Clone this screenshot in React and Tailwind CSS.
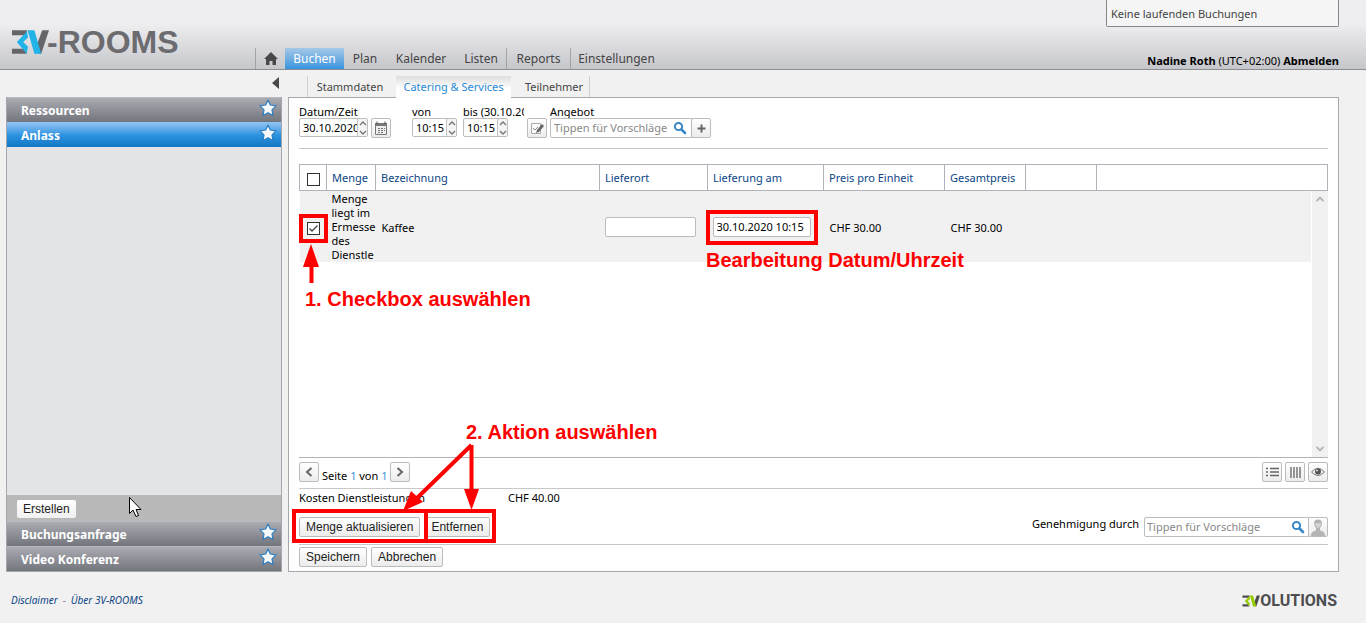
import React from "react";

function SearchIcon() {
  return (
    <svg width="14" height="14" viewBox="0 0 14 14" fill="none" className="shrink-0">
      <circle cx="5.5" cy="5.5" r="3.6" stroke="#3b87c4" strokeWidth="2" />
      <path d="M8.5 8.5L12 12" stroke="#3b87c4" strokeWidth="2.6" strokeLinecap="round" />
    </svg>
  );
}

function StarIcon() {
  return (
    <svg width="18" height="18" viewBox="0 0 18 18">
      <path d="M9 1L11.300 6L17 6.800L13 10.800L14 16.500L9 13.800L4 16.500L5 10.800L1 6.800L6.700 6Z" fill="#f6f8fa" stroke="#2a7fc2" strokeWidth="1.2" strokeLinejoin="round" />
    </svg>
  );
}

function Mark({ width, height, dark, bright }) {
  return (
    <svg width={width} height={height} viewBox="0 0 39 24" role="img" aria-label="3V" className="shrink-0">
      <path d="M1 0H17L14 5H1ZM1 19H13L16 24H1Z" fill={dark} />
      <path d="M39 0H32L26.500 15L29 24H31Z" fill={dark} />
      <path d="M16.500 1L6 12L16 24L17.500 17L12.500 12L17.500 7.500Z" fill={bright} />
      <path d="M17 0H24L31 24H24Z" fill={bright} />
    </svg>
  );
}

function Chevrons() {
  return (
    <span className="flex h-full w-[10px] shrink-0 items-center justify-center border-l border-[#c4c4c4] bg-[#f4f4f4]">
      <svg width="8" height="16" viewBox="0 0 8 16" fill="none" stroke="#777" strokeWidth="1.4">
        <path d="M1 5L4 2L7 5M1 11L4 14L7 11" />
      </svg>
    </span>
  );
}

function Spin({ id, label, value, width, gap }) {
  return (
    <div className={gap}>
      <label htmlFor={id} className="block h-[13px] overflow-hidden whitespace-nowrap text-[11px] leading-[14px]">{label}</label>
      <div className={`flex h-[19px] overflow-hidden rounded-xs border border-[#bdbdbd] bg-white ${width}`}>
        <input id={id} defaultValue={value} className="h-full w-full min-w-0 flex-1 pl-[3px] text-[11px] outline-none" />
        <Chevrons />
      </div>
    </div>
  );
}

function IconButton({ label, children, className = "" }) {
  return (
    <button aria-label={label} className={`flex size-5 shrink-0 items-center justify-center rounded-xs border border-[#bcbcbc] bg-linear-to-b from-white to-[#ececec] ${className}`}>
      {children}
    </button>
  );
}

function PushButton({ children }) {
  return (
    <button className="h-5 rounded-xs border border-[#bcbcbc] bg-linear-to-b from-white to-[#ececec] px-[6px] font-['Liberation_Sans',sans-serif] text-[12px] leading-[18px] text-[#222]">
      {children}
    </button>
  );
}

function PanelHeader({ title, active }) {
  return (
    <button className={`flex h-[25px] w-full shrink-0 items-start justify-between border-t pr-1 pl-[14px] text-left text-[12px] leading-[26px] font-bold text-white ${active ? "border-[#8fc3ef] bg-linear-to-b from-[#8cc2f4] via-[#2c93e0] to-[#1078c6]" : "border-[#b9bac0] bg-linear-to-b from-[#abacb2] to-[#73757d]"}`}>
      <span>{title}</span>
      <span className="pt-px"><StarIcon /></span>
    </button>
  );
}

const nav = [
  { label: "Plan", cls: "w-[42px]" },
  { label: "Kalender", cls: "w-[70px]" },
  { label: "Listen", cls: "w-[50px]" },
  { label: "Reports", cls: "w-[64px] border-l border-[#a2a3a7]" },
  { label: "Einstellungen", cls: "w-[92px] border-l border-[#a2a3a7]" },
];

function Header() {
  return (
    <header className="flex h-[70px] justify-between border-b border-[#8d8e93] bg-linear-to-b from-[#eeeef0] from-35% to-[#c6c7cb] pr-[27px]">
      <div className="flex items-end">
        <div className="flex w-[255px] items-center self-start pt-6 pl-[11px] text-[#6b6b70]">
          <Mark width="38" height="24" dark="#65656a" bright="#22b3e8" />
          <span className="-ml-0.5 font-['Liberation_Sans',sans-serif] text-[32px] leading-9 font-bold">-ROOMS</span>
        </div>
        <nav className="flex h-[21px] text-[12px] leading-[21px] text-[#444]">
          <a href="#home" aria-label="Startseite" className="flex w-[30px] items-center justify-center border-l border-[#a2a3a7]">
            <svg width="14" height="13" viewBox="0 0 14 13" fill="#484848">
              <path d="M7 0L14 7H12V13H8.500V9H5.500V13H2V7H0Z" />
            </svg>
          </a>
          <a href="#buchen" className="w-[59px] bg-linear-to-b from-[#a3c8e6] to-[#3494de] text-center text-white">Buchen</a>
          {nav.map((n) => (
            <a key={n.label} href={"#" + n.label} className={`text-center ${n.cls}`}>{n.label}</a>
          ))}
        </nav>
      </div>
      <div className="flex flex-col items-end justify-between text-[11px]">
        <div className="h-[27px] w-[233px] rounded-b-xs border border-t-0 border-[#85858a] bg-[#f5f5f5] pt-[5px] pl-1 leading-[18px] text-[#444]">Keine laufenden Buchungen</div>
        <div className="text-black">
          <b>Nadine Roth</b> (UTC+02:00) <a href="#abmelden" className="font-bold">Abmelden</a>
        </div>
      </div>
    </header>
  );
}

function Sidebar() {
  return (
    <aside className="flex w-[276px] shrink-0 flex-col">
      <div className="flex h-[27px] justify-end pt-[7px] pr-[3px]">
        <button aria-label="Einklappen" className="h-3">
          <svg width="7" height="12" viewBox="0 0 7 12"><path d="M7 0V12L0 6Z" fill="#484848" /></svg>
        </button>
      </div>
      <div className="flex flex-1 flex-col border border-t-0 border-[#a6a7ae] bg-[#e3e4e6]">
        <PanelHeader title="Ressourcen" />
        <PanelHeader title="Anlass" active />
        <div className="flex-1" />
        <div className="flex h-[26px] shrink-0 items-start bg-[#b9b9b9] pt-[5px] pl-[10px]">
          <button className="h-[18px] rounded-xs bg-linear-to-b from-white to-[#f0f0f0] px-[6px] font-['Liberation_Sans',sans-serif] text-[12px] leading-[18px] text-[#222]">Erstellen</button>
        </div>
        <PanelHeader title="Buchungsanfrage" />
        <PanelHeader title="Video Konferenz" />
      </div>
    </aside>
  );
}

function Tabs() {
  return (
    <div className="flex h-[21px] items-stretch pl-[19px] text-[11px] leading-[22px] text-[#444]">
      <button className="w-[89px] border-l border-[#cfcfcf] pr-1">Stammdaten</button>
      <button className="relative z-10 -mb-px w-[115px] bg-linear-to-b from-[#dedede] to-white to-60% text-[#2a8ad6]">Catering &amp; Services</button>
      <button className="w-[79px] border-r border-[#cfcfcf] pl-2">Teilnehmer</button>
    </div>
  );
}

function Filters() {
  return (
    <div className="flex h-[44px] items-start border-b border-[#c8c8c8]">
      <Spin id="datum" label="Datum/Zeit" value="30.10.2020" width="w-[69px]" gap="" />
      <IconButton label="Kalender öffnen" className="mt-[13px] ml-[3px]">
        <svg width="14" height="14" viewBox="0 0 14 14">
          <path d="M1.500 2.500H12.500V13.500H1.500Z" fill="#eee" stroke="#777" />
          <path d="M1 2H13V5H1Z" fill="#777" />
          <path d="M3 0.500V3M11 0.500V3" stroke="#555" />
          <path d="M4 7.500H11M4 9.500H11M4 11.500H9" stroke="#777" strokeDasharray="2 1" />
        </svg>
      </IconButton>
      <Spin id="von" label="von" value="10:15" width="w-[45px]" gap="ml-[21px]" />
      <Spin id="bis" label="bis (30.10.20" value="10:15" width="w-[45px]" gap="ml-[6px] w-[61px]" />
      <IconButton label="Notiz" className="mt-[13px] ml-[3px]">
        <svg width="14" height="14" viewBox="0 0 14 14">
          <path d="M1.500 2.500H10.500V12.500H1.500Z" fill="#fafafa" stroke="#aaa" />
          <path d="M3 7L5 9L8 6" stroke="#888" fill="none" />
          <path d="M6 12L7 9L12 3L14 5L9 11Z" fill="#666" />
        </svg>
      </IconButton>
      <div className="ml-[3px]">
        <label htmlFor="angebot" className="block h-[13px] text-[11px] leading-[14px]">Angebot</label>
        <div className="flex">
          <div className="flex h-5 w-[142px] items-center rounded-l-xs border border-[#bdbdbd] bg-white pr-1">
            <input id="angebot" placeholder="Tippen für Vorschläge" className="w-full min-w-0 flex-1 pl-[3px] text-[11px] outline-none placeholder:text-[#888]" />
            <SearchIcon />
          </div>
          <IconButton label="Hinzufügen" className="-ml-px">
            <svg width="9" height="9" viewBox="0 0 9 9"><path d="M4.500 0.500V8.500M0.500 4.500H8.500" stroke="#666" strokeWidth="2" /></svg>
          </IconButton>
        </div>
      </div>
    </div>
  );
}

const headCell = "border border-[#b2b2ba] px-[5px] text-left font-normal whitespace-nowrap";
const check = "block size-[13px] appearance-none border border-[#333] bg-white";

function Services() {
  return (
    <div className="relative h-[294px] border-b border-[#b2b2ba]">
      <table className="w-full table-fixed border-collapse text-[11px] leading-[14px]">
        <colgroup>
          <col className="w-[27px]" />
          <col className="w-[49px]" />
          <col className="w-[224px]" />
          <col className="w-[108px]" />
          <col className="w-[116px]" />
          <col className="w-[121px]" />
          <col className="w-[81px]" />
          <col className="w-[71px]" />
          <col />
          <col className="w-[17px]" />
        </colgroup>
        <thead className="text-[#0c4585]">
          <tr className="h-[26px]">
            <th className="border border-[#b2b2ba] pt-1 pl-[7px]"><input type="checkbox" aria-label="Alle auswählen" className={check} /></th>
            <th className={headCell}>Menge</th>
            <th className={headCell}>Bezeichnung</th>
            <th className={headCell}>Lieferort</th>
            <th className={headCell}>Lieferung am</th>
            <th className={headCell}>Preis pro Einheit</th>
            <th className={headCell}>Gesamtpreis</th>
            <th className={headCell} />
            <th className={headCell} colSpan={2} />
          </tr>
        </thead>
        <tbody>
          <tr className="h-[71px]">
            <td className="bg-[#f1f1f1] pt-1 pl-[7px]">
              <span className="relative block size-[13px]">
                <input type="checkbox" defaultChecked aria-label="Kaffee auswählen" className={check} />
                <svg width="13" height="13" viewBox="0 0 13 13" className="pointer-events-none absolute inset-0"><path d="M2.500 6.500L5 9L10.500 3.500" fill="none" stroke="#444" strokeWidth="1.300" /></svg>
              </span>
            </td>
            <td className="overflow-hidden bg-[#f1f1f1] pt-px pl-[5px]">Menge<br />liegt im<br />Ermesse<br />des<br />Dienstle</td>
            <td className="bg-[#f1f1f1] pt-0.5 pl-[6px]">Kaffee</td>
            <td className="bg-[#f1f1f1] px-[5px]"><input aria-label="Lieferort" className="block h-5 w-[91px] rounded-xs border border-[#bdbdbd] bg-white px-1 outline-none" /></td>
            <td className="bg-[#f1f1f1] px-[5px]"><input aria-label="Lieferung am" defaultValue="30.10.2020 10:15" className="block h-5 w-[98px] rounded-xs border border-[#bdbdbd] bg-white pl-[3px] outline-none" /></td>
            <td className="bg-[#f1f1f1] pt-0.5 pl-[6px]">CHF 30.00</td>
            <td className="bg-[#f1f1f1] pt-0.5 pl-[6px]">CHF 30.00</td>
            <td className="bg-[#f1f1f1]" />
            <td className="bg-[#f1f1f1]" />
            <td />
          </tr>
        </tbody>
      </table>
      <div className="absolute top-[27px] right-0 bottom-0 flex w-4 flex-col items-center justify-between bg-[#f1f1f1] py-[5px]">
        <svg width="8" height="6" viewBox="0 0 8 6" fill="none" stroke="#b5b5b5" strokeWidth="1.800"><path d="M0.500 5L4 1.500L7.500 5" /></svg>
        <svg width="8" height="6" viewBox="0 0 8 6" fill="none" stroke="#b5b5b5" strokeWidth="1.800"><path d="M0.500 1L4 4.500L7.500 1" /></svg>
      </div>
    </div>
  );
}

function Pager() {
  return (
    <div className="flex h-[31px] items-start justify-between border-b border-[#c8c8c8] pt-1">
      <div className="flex items-start text-[11px]">
        <IconButton label="Vorherige Seite">
          <svg width="8" height="10" viewBox="0 0 8 10" fill="none" stroke="#666" strokeWidth="2"><path d="M6.500 1L2 5L6.500 9" /></svg>
        </IconButton>
        <span className="px-[3px] pt-[6px] leading-4">Seite <span className="text-[#3b8fd8]">1</span> von <span className="text-[#3b8fd8]">1</span></span>
        <IconButton label="Nächste Seite">
          <svg width="8" height="10" viewBox="0 0 8 10" fill="none" stroke="#666" strokeWidth="2"><path d="M1.500 1L6 5L1.500 9" /></svg>
        </IconButton>
      </div>
      <div className="flex gap-[3px]">
        <IconButton label="Liste">
          <svg width="13" height="10" viewBox="0 0 13 10" stroke="#666" strokeWidth="1.500"><path d="M0 1.500H2M4 1.500H13M0 5H2M4 5H13M0 8.500H2M4 8.500H13" /></svg>
        </IconButton>
        <IconButton label="Spalten">
          <svg width="11" height="11" viewBox="0 0 11 11" stroke="#777" strokeWidth="1.500"><path d="M1 0V11M4 0V11M7 0V11M10 0V11" /></svg>
        </IconButton>
        <IconButton label="Ansicht">
          <svg width="14" height="10" viewBox="0 0 14 10"><path d="M0.500 5Q7 -2.500 13.500 5Q7 12 0.500 5Z" fill="#eee" stroke="#777" /><circle cx="7" cy="4.500" r="3" fill="#555" /><circle cx="6" cy="3.500" r="1" fill="#ddd" /></svg>
        </IconButton>
      </div>
    </div>
  );
}

function Actions() {
  return (
    <div className="flex h-14 items-start justify-between border-b border-[#c8c8c8]">
      <div className="pt-[2px] text-[11px] leading-[14px]">
        <div className="flex"><span className="w-[209px]">Kosten Dienstleistungen</span><span>CHF 40.00</span></div>
        <div className="flex gap-1 pt-3">
          <PushButton>Menge aktualisieren</PushButton>
          <PushButton>Entfernen</PushButton>
        </div>
      </div>
      <div className="flex items-start pt-7 text-[11px]">
        <label htmlFor="genehmigung" className="pr-[5px] leading-[14px]">Genehmigung durch</label>
        <div className="flex h-5 w-[165px] items-center rounded-l-xs border border-[#bdbdbd] bg-white pr-[3px]">
          <input id="genehmigung" placeholder="Tippen für Vorschläge" className="w-full min-w-0 flex-1 pl-[2px] text-[11px] outline-none placeholder:text-[#888]" />
          <SearchIcon />
        </div>
        <IconButton label="Person wählen" className="-ml-px">
          <svg width="16" height="17" viewBox="0 0 16 17"><path d="M1 17Q1 12 6 11.500L6 9Q4 7 4 4Q4 0.500 8 0.500Q12 0.500 12 4Q12 7 10 9L10 11.500Q15 12 15 17Z" fill="#b4b4b4" /><path d="M5 4Q8 5 11 3.500Q11 8 8 9Q5.500 8 5 4Z" fill="#d4d4d4" /></svg>
        </IconButton>
      </div>
    </div>
  );
}

const note = "absolute font-['Liberation_Sans',sans-serif] text-[20px] leading-6 font-bold whitespace-nowrap text-[#ff0000]";

function Annotations() {
  return (
    <div className="pointer-events-none absolute inset-0">
      <div className="absolute top-[116px] left-[10px] h-[29px] w-[29px] border-4 border-[#ff0000]" />
      <div className="absolute top-[112px] left-[417px] h-[35px] w-[112px] border-4 border-[#ff0000]" />
      <div className="absolute top-[411px] left-[3px] h-[34px] w-[136px] border-4 border-[#ff0000]" />
      <div className="absolute top-[411px] left-[135px] h-[34px] w-[72px] border-4 border-[#ff0000]" />
      <svg width="220" height="420" viewBox="0 0 220 420" className="absolute top-0 left-0" fill="#ff0000" stroke="#ff0000">
        <path d="M22.500 185V165" strokeWidth="4" />
        <path d="M22 146L30 169H14Z" stroke="none" />
        <path d="M182.500 347V393M182.500 347L127 401" strokeWidth="4" />
        <path d="M182.500 412L175 391H190Z" stroke="none" />
        <path d="M114 413L122 393L134 404Z" stroke="none" />
      </svg>
      <span className={`${note} top-[189px] left-4`}>1. Checkbox auswählen</span>
      <span className={`${note} top-[150px] left-[417px]`}>Bearbeitung Datum/Uhrzeit</span>
      <span className={`${note} top-[322px] left-[177px]`}>2. Aktion auswählen</span>
    </div>
  );
}

export default function App() {
  return (
    <div className="relative min-h-screen bg-[#f1f1f1] font-['Noto_Sans',sans-serif] text-black">
      <Header />
      <main className="flex gap-[6px] pr-[27px] pl-[6px]">
        <Sidebar />
        <section className="min-w-0 flex-1 pt-[6px]">
          <Tabs />
          <div className="relative border border-[#a6a7ae] bg-white px-[10px] pt-[7px] pb-1">
            <Filters />
            <div className="h-[15px]" />
            <Services />
            <Pager />
            <Actions />
            <div className="flex gap-1 pt-[2px]">
              <PushButton>Speichern</PushButton>
              <PushButton>Abbrechen</PushButton>
            </div>
            <Annotations />
          </div>
        </section>
      </main>
      <footer className="flex items-start justify-between pt-5 pr-[29px] pl-[11px]">
        <div className="text-[10px] leading-4 text-[#0c4585] italic">
          <a href="#disclaimer">Disclaimer</a>
          <span className="px-[5px] text-[#888]">-</span>
          <a href="#ueber">Über 3V-ROOMS</a>
        </div>
        <div className="flex items-center text-[#4d4d50]">
          <Mark width="18" height="12" dark="#4d4d50" bright="#99cc00" />
          <span className="font-['Roboto',sans-serif] text-base leading-[18px] font-bold">OLUTIONS</span>
        </div>
      </footer>
      <svg width="13" height="20" viewBox="0 0 13 20" className="pointer-events-none absolute top-[497px] left-[129px]">
        <path d="M0.500 0.500V16.500L4 13L7 19.500L9.500 18.500L7 12.500H12Z" fill="#fff" stroke="#000" />
      </svg>
    </div>
  );
}
